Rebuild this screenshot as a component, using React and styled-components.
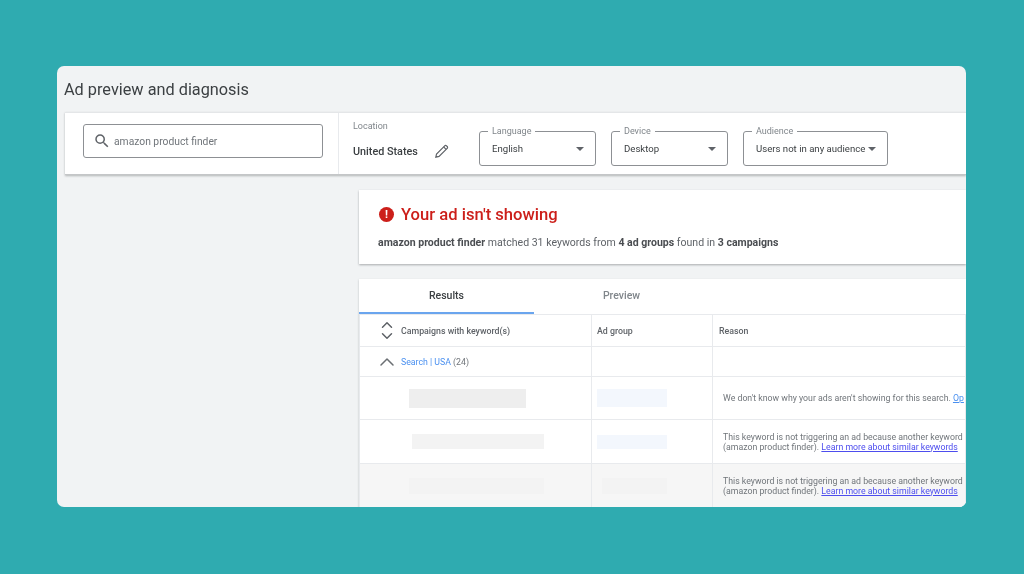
import React from 'react';
import styled, { createGlobalStyle } from 'styled-components';
import { ChevronUp, ChevronDown } from 'lucide-react';

const GlobalStyle = createGlobalStyle`
  html, body {
    margin: 0;
    padding: 0;
    height: 100%;
    background: #2fabb0;
    font-family: Roboto, "Liberation Sans", sans-serif;
  }
`;

const Page = styled.div`
  width: 1024px;
  height: 574px;
  padding: 66px 58px 67px 57px;
  box-sizing: border-box;
  overflow: hidden;
`;

const Card = styled.div`
  height: 441px;
  background: #f1f3f4;
  border-radius: 7px;
  overflow: hidden;
  padding-left: 1px;
  display: flex;
  flex-direction: column;
  filter: blur(0.35px);
`;

const Title = styled.h1`
  margin: 0;
  height: 46px;
  flex: none;
  padding-left: 6px;
  display: flex;
  align-items: center;
  font-size: 16.3px;
  font-weight: 400;
  color: #3c4043;
`;

const Toolbar = styled.div`
  height: 61px;
  margin-left: 7px;
  flex: none;
  background: #fff;
  display: flex;
  border-top: 1px solid #e4e6e8;
  border-bottom: 1px solid #c4c6c8;
  box-shadow: 0 1px 2px rgba(60, 64, 67, 0.35);
`;

const SearchCell = styled.div`
  width: 274px;
  flex: none;
  box-sizing: border-box;
  border-right: 1px solid #e8eaed;
  padding: 11px 15px 0 18px;
`;

const SearchBox = styled.div`
  height: 34px;
  box-sizing: border-box;
  border: 1px solid #8d9094;
  border-radius: 3px;
  display: flex;
  align-items: center;
  gap: 3px;
  padding-left: 9px;
  font-size: 10.3px;
  color: #70757a;
`;

const LocationCell = styled.div`
  width: 140px;
  flex: none;
  box-sizing: border-box;
  padding: 7px 0 0 14px;
`;

const FieldLabel = styled.div`
  font-size: 9px;
  line-height: 12px;
  color: #80868b;
`;

const LocationValue = styled.div`
  margin-top: 11px;
  display: flex;
  align-items: center;
  gap: 15px;
  font-size: 10.8px;
  font-weight: 500;
  color: #3c4043;
`;

const Selects = styled.div`
  display: flex;
  gap: 15px;
  padding-top: 18px;
`;

const SelectBox = styled.div`
  position: relative;
  width: ${props => props.width}px;
  height: 35px;
  box-sizing: border-box;
  border: 1px solid #8d9094;
  border-radius: 3px;
  display: flex;
  align-items: center;
  justify-content: space-between;
  padding: 0 11px 0 12px;
  font-size: 9.6px;
  color: #3c4043;
  white-space: nowrap;
`;

const SelectLabel = styled.span`
  position: absolute;
  top: -6px;
  left: 8px;
  padding: 0 4px;
  background: #fff;
  font-size: 9px;
  line-height: 11px;
  color: #80868b;
`;

const Caret = styled.span`
  width: 0;
  height: 0;
  border-left: 4px solid transparent;
  border-right: 4px solid transparent;
  border-top: 4px solid #5f6368;
`;

const Main = styled.div`
  margin-left: 301px;
  padding-top: 15px;
  flex: none;
  display: flex;
  flex-direction: column;
  gap: 15px;
`;

const AlertCard = styled.div`
  height: 74px;
  box-sizing: border-box;
  background: #fff;
  padding: 15px 0 0 20px;
  box-shadow: 0 1px 2px rgba(60, 64, 67, 0.4);
`;

const AlertTitle = styled.div`
  display: flex;
  align-items: center;
  gap: 7px;
  font-size: 16.6px;
  font-weight: 500;
  color: #cc1f1a;
`;

const AlertIcon = styled.span`
  width: 15px;
  height: 15px;
  border-radius: 50%;
  background: #cc1f1a;
  color: #fff;
  font-size: 11px;
  font-weight: 700;
  line-height: 15px;
  text-align: center;
`;

const AlertText = styled.div`
  margin-top: 12px;
  margin-left: -1px;
  font-size: 10.55px;
  color: #5f6368;

  & b {
    font-weight: 700;
    color: #4a4d51;
  }
`;

const ResultsCard = styled.div`
  background: #fff;
  box-shadow: 0 1px 2px rgba(60, 64, 67, 0.3);
`;

const Tabs = styled.div`
  display: flex;
  height: 35px;
`;

const Tab = styled.div`
  width: 175px;
  box-sizing: border-box;
  display: flex;
  align-items: center;
  justify-content: center;
  font-size: 10.5px;
  font-weight: 500;
  color: ${props => (props.active ? '#3c4043' : '#80868b')};
  border-bottom: 2px solid ${props => (props.active ? '#6aa5ee' : 'transparent')};
`;

const Table = styled.div`
  display: grid;
  grid-template-columns: 233px 121px 1fr;
  grid-template-rows: 32px 30px 43px 44px 44px;
  border-top: 1px solid #e8eaed;
`;

const Cell = styled.div`
  min-width: 0;
  box-sizing: border-box;
  display: flex;
  align-items: center;
  white-space: nowrap;
  overflow: hidden;
  border-left: ${props => (props.first ? '1px solid #e8eaed' : 'none')};
  border-right: 1px solid #e8eaed;
  border-bottom: 1px solid #e8eaed;
  background: ${props => (props.shaded ? '#f6f6f6' : '#fff')};
  padding-left: ${props => props.pad || 0}px;
`;

const HeadText = styled.span`
  font-size: 8.8px;
  font-weight: 500;
  color: #5f6368;
`;

const SortIcon = styled.span`
  width: 13px;
  margin-right: 8px;
  display: flex;
  flex-direction: column;
  align-items: center;
  color: #5f6368;

  & svg + svg {
    margin-top: -7px;
  }
`;

const GroupIcon = styled.span`
  width: 13px;
  margin-right: 8px;
  display: flex;
  justify-content: center;
  color: #6b6f73;

  & svg {
    flex: none;
  }
`;

const GroupText = styled.span`
  font-size: 8.75px;
  color: #70757a;

  & a {
    color: #4a90f0;
  }
`;

const Placeholder = styled.div`
  width: ${props => props.w}px;
  height: ${props => props.h}px;
  background: ${props => props.color};
  filter: blur(0.6px);
`;

const ReasonText = styled.div`
  font-size: 8.75px;
  line-height: 10px;
  color: #70757a;
  padding-left: 10px;

  & a {
    color: ${props => props.linkColor || '#4d4dee'};
    text-decoration: underline;
  }
`;

const SearchGlyph = () => (
  <svg width="18" height="18" viewBox="0 0 24 24" fill="#5f6368">
    <path d="M15.5 14h-.79l-.28-.27A6.471 6.471 0 0 0 16 9.5 6.5 6.5 0 1 0 9.5 16c1.61 0 3.09-.59 4.23-1.57l.27.28v.79l5 4.99L20.49 19l-4.99-5zm-6 0C7.01 14 5 11.99 5 9.5S7.01 5 9.5 5 14 7.01 14 9.5 11.99 14 9.5 14z" />
  </svg>
);

const PencilGlyph = () => (
  <svg width="17" height="17" viewBox="0 0 24 24" fill="none" stroke="#5f6368" strokeWidth="1.7">
    <path d="M4 20l1-4.5L16.5 4a1.8 1.8 0 0 1 2.6 0l.9.9a1.8 1.8 0 0 1 0 2.6L8.5 19z" />
    <path d="M15 5.5l3.5 3.5" />
  </svg>
);

const SimilarReason = () => (
  <ReasonText>
    This keyword is not triggering an ad because another keyword i
    <br />
    (amazon product finder). <a>Learn more about similar keywords</a>
  </ReasonText>
);

const selects = [
  { label: 'Language', value: 'English', width: 117 },
  { label: 'Device', value: 'Desktop', width: 117 },
  { label: 'Audience', value: 'Users not in any audience', width: 145 },
];

const App = () => (
  <Page>
    <GlobalStyle />
    <Card>
      <Title>Ad preview and diagnosis</Title>
      <Toolbar>
        <SearchCell>
          <SearchBox>
            <SearchGlyph />
            amazon product finder
          </SearchBox>
        </SearchCell>
        <LocationCell>
          <FieldLabel>Location</FieldLabel>
          <LocationValue>
            United States
            <PencilGlyph />
          </LocationValue>
        </LocationCell>
        <Selects>
          {selects.map(({ label, value, width }) => (
            <SelectBox key={label} width={width}>
              <SelectLabel>{label}</SelectLabel>
              {value}
              <Caret />
            </SelectBox>
          ))}
        </Selects>
      </Toolbar>
      <Main>
        <AlertCard>
          <AlertTitle>
            <AlertIcon>!</AlertIcon>
            Your ad isn't showing
          </AlertTitle>
          <AlertText>
            <b>amazon product finder</b> matched 31 keywords from <b>4 ad groups</b> found in <b>3 campaigns</b>
          </AlertText>
        </AlertCard>
        <ResultsCard>
          <Tabs>
            <Tab active>Results</Tab>
            <Tab>Preview</Tab>
          </Tabs>
          <Table>
            <Cell first pad={20}>
              <SortIcon>
                <ChevronUp size={18} />
                <ChevronDown size={18} />
              </SortIcon>
              <HeadText>Campaigns with keyword(s)</HeadText>
            </Cell>
            <Cell pad={5}><HeadText>Ad group</HeadText></Cell>
            <Cell pad={6}><HeadText>Reason</HeadText></Cell>

            <Cell first pad={20}>
              <GroupIcon><ChevronUp size={24} strokeWidth={1.5} /></GroupIcon>
              <GroupText><a>Search | USA</a> (24)</GroupText>
            </Cell>
            <Cell />
            <Cell />

            <Cell first pad={49}><Placeholder w={117} h={19} color="#eeeeee" /></Cell>
            <Cell pad={5}><Placeholder w={70} h={18} color="#f3f7fd" /></Cell>
            <Cell><ReasonText linkColor="#4a90f0">We don't know why your ads aren't showing for this search. <a>Op</a></ReasonText></Cell>

            <Cell first pad={52}><Placeholder w={132} h={15} color="#f3f3f3" /></Cell>
            <Cell pad={5}><Placeholder w={70} h={14} color="#f3f7fd" /></Cell>
            <Cell><SimilarReason /></Cell>

            <Cell first shaded pad={49}><Placeholder w={135} h={16} color="#f3f3f3" /></Cell>
            <Cell shaded pad={10}><Placeholder w={65} h={16} color="#f3f3f3" /></Cell>
            <Cell shaded><SimilarReason /></Cell>
          </Table>
        </ResultsCard>
      </Main>
    </Card>
  </Page>
);

export default App;
